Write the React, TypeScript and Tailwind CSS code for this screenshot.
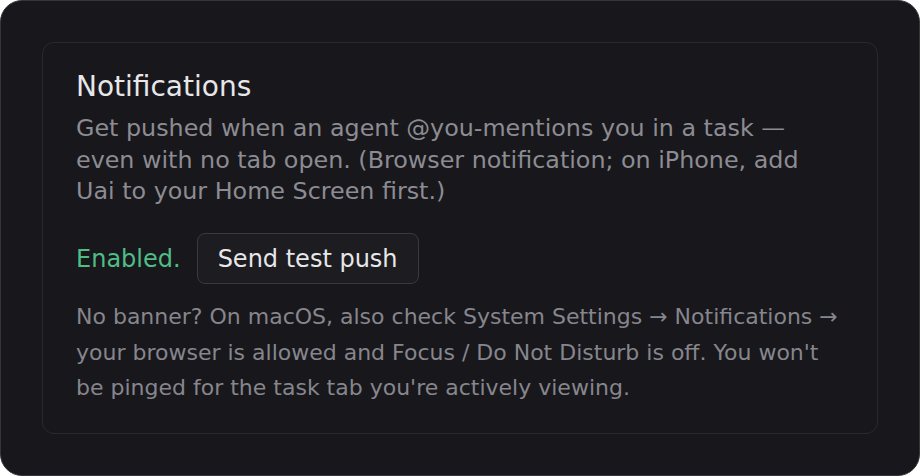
import React from 'react';

export default function App() {
    return (
        <div className="w-[920px] h-[476px] bg-white">
            <div
                className="h-full w-full rounded-[22px] border border-[#36353b] bg-[#18171c] p-[41px]"
                style={{ fontFamily: '"DejaVu Sans", sans-serif' }}
            >
                {/* Card */}
                <div className="rounded-[12px] border border-[#2a292f] bg-[#18171c] pl-[33px] pr-[37px] pt-[27px] pb-[27px]">
                    <h2 className="text-[28px] leading-[34px] text-[#e7e7ea]">Notifications</h2>
                    <p className="mt-[9px] text-[23.8px] leading-[31.7px] text-[#8c8c92]">
                        Get pushed when an agent @you-mentions you in a task — even with no tab open. (Browser
                        notification; on iPhone, add Uai to your Home Screen first.)
                    </p>

                    <div className="mt-[25px] flex items-center gap-[16px]">
                        <span className="text-[24px] text-[#4fbd86]">Enabled.</span>
                        <button className="h-[51px] rounded-[8px] border border-[#3a393f] bg-[#1d1c21] px-[20px] text-[24px] text-[#e7e7ea]">
                            Send test push
                        </button>
                    </div>

                    <p className="mt-[15px] text-[22px] leading-[35.5px] text-[#86868c]">
                        No banner? On macOS, also check System Settings → Notifications → your browser is allowed
                        and Focus / Do Not Disturb is off. You won't be pinged for the task tab you're actively
                        viewing.
                    </p>
                </div>
            </div>
        </div>
    );
}
